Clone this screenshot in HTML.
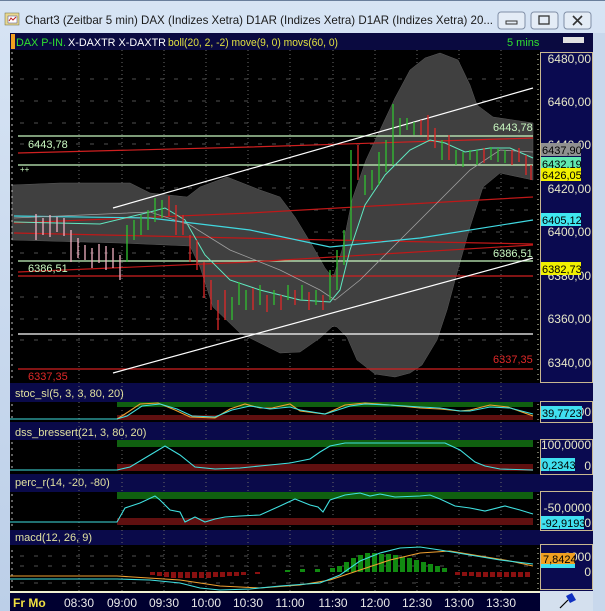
<!DOCTYPE html>
<html><head><meta charset="utf-8"><style>
html,body{margin:0;padding:0;width:605px;height:611px;overflow:hidden;background:#bfd2ea}
svg{display:block}
text{font-family:"Liberation Sans",sans-serif;}
</style></head><body>
<svg width="605" height="611" viewBox="0 0 605 611" xmlns="http://www.w3.org/2000/svg">
<defs>
<linearGradient id="tb" x1="0" y1="0" x2="0" y2="1"><stop offset="0" stop-color="#d7e4f4"/><stop offset="1" stop-color="#bccfe8"/></linearGradient>
</defs>
<rect x="0" y="0" width="605" height="611" fill="url(#tb)"/>
<rect x="0" y="0" width="605" height="1" fill="#6a7f9c"/>
<rect x="5" y="13" width="14" height="12" fill="#e8d890" stroke="#6a6a40" stroke-width="0.5"/>
<rect x="8" y="16" width="9" height="7" fill="#fff" stroke="#404080" stroke-width="0.5"/>
<polyline points="9,21 11,18 13,20 16,17" fill="none" stroke="#c02020" stroke-width="1"/>
<text x="25" y="24" font-size="12" fill="#1a1a1a" textLength="468" lengthAdjust="spacingAndGlyphs">Chart3 (Zeitbar 5 min)  DAX (Indizes Xetra) D1AR (Indizes Xetra) D1AR (Indizes Xetra) 20...</text>
<g stroke="#7f8ea6" fill="#e4ecf6"><rect x="498" y="12" width="27" height="17" rx="3"/><rect x="531" y="12" width="27" height="17" rx="3"/><rect x="564" y="12" width="27" height="17" rx="3"/></g>
<rect x="506" y="21" width="11" height="3" fill="none" stroke="#333" stroke-width="1"/>
<rect x="539" y="16" width="10" height="8" fill="none" stroke="#333" stroke-width="1.3"/>
<path d="M573 16 L582 25 M582 16 L573 25" stroke="#333" stroke-width="1.6"/>
<rect x="10" y="33" width="583" height="578" fill="#0a0a4a"/>
<rect x="10" y="33" width="583" height="17" fill="#0a0a40"/>
<rect x="11" y="34" width="4" height="15" fill="#f0a020"/>
<text x="16" y="46" font-size="11" fill="#30e030" textLength="50" lengthAdjust="spacingAndGlyphs">DAX P-IN.</text>
<text x="68" y="46" font-size="11" fill="#ffffff" textLength="98" lengthAdjust="spacingAndGlyphs">X-DAXTR X-DAXTR</text>
<text x="168" y="46" font-size="11" fill="#e0e040" textLength="170" lengthAdjust="spacingAndGlyphs">boll(20, 2, -2) move(9, 0) movs(60, 0)</text>
<text x="507" y="46" font-size="11" fill="#30e030">5 mins</text>
<rect x="563" y="37" width="21" height="6" fill="#e0e0e0"/>
<rect x="10" y="50" width="530" height="333" fill="#000"/>
<rect x="10" y="402" width="530" height="20" fill="#000"/>
<rect x="10" y="440" width="530" height="34" fill="#000"/>
<rect x="10" y="492" width="530" height="38" fill="#000"/>
<rect x="10" y="545" width="530" height="46" fill="#000"/>
<g stroke="#6a6a6a" stroke-width="1" stroke-dasharray="1,3">
<path d="M79 50V591M122 50V591M164 50V591M206 50V591M248 50V591M290 50V591M333 50V591M375 50V591M417 50V591M459 50V591M501 50V591"/>
</g>
<g stroke="#505050" stroke-width="1" stroke-dasharray="4,10">
<path d="M20 79H533M20 101H533M20 123H533M20 144H533M20 188H533M20 210H533M20 232H533M20 253H533M20 297H533M20 319H533M20 340H533"/>
<path d="M20 556H533M20 566H533M20 583H533"/>
</g>
<polygon fill="#404040" stroke="#5a5a5a" stroke-width="0.5" points="12,185 60,183 130,183 150,193 187,197 200,187 227,177 260,190 280,197 295,217 312,245 325,268 333,278 342,250 352,200 366,160 380,130 395,98 410,70 425,58 440,53 458,60 470,85 477,105 493,117 533,123 533,180 500,173 483,187 470,227 457,273 447,310 437,340 422,365 410,373 395,377 375,374 357,360 347,337 337,327 333,326 320,338 300,352 280,353 240,333 213,307 200,267 190,246 120,243 12,240"/>
<g stroke-width="1.2" fill="none">
<path d="M18 136H533" stroke="#c8f8c0"/>
<path d="M18 165H533" stroke="#c8f8c0"/>
<path d="M18 261H533" stroke="#c8f8c0"/>
<path d="M18 334H533" stroke="#ffffff"/>
<path d="M18 153 L250 147 L533 138" stroke="#d02020"/>
<path d="M18 369H533" stroke="#d02020"/>
<path d="M18 276H533" stroke="#d02020"/>
<path d="M14 223 L250 213 L533 197" stroke="#c01818"/>
<path d="M14 233 L330 240 L533 244" stroke="#c01818"/>
<path d="M18 272 L250 262 L533 245" stroke="#c01818"/>
<path d="M14 216 L150 218 L250 230 L330 247 L420 238 L533 220" stroke="#40d8e0"/>
<path d="M113 208 L533 88" stroke="#ffffff"/>
<path d="M113 373 L533 258" stroke="#ffffff"/>
<path d="M14 222 L100 224 L150 212 L165 208 L185 220 L205 255 L230 280 L260 290 L300 300 L330 302 L340 290 L350 250 L365 205 L385 175 L410 150 L430 140 L445 143 L465 152 L490 148 L510 148 L533 158" stroke="#60e8c0" stroke-width="1"/>
<path d="M14 218 L150 212 L190 225 L230 250 L280 270 L320 290 L335 300 L360 280 L400 240 L440 200 L470 170 L500 150 L533 152" stroke="#a0a0a0" stroke-width="0.8"/>
</g>
<g stroke-width="1.3">
<g stroke="#f0b0c0"><path d="M36 214V240M43 218V235M50 215V237M57 217V232M64 218V236M71 230V262M78 238V258M85 245V260M92 248V268M99 244V263M106 246V270M113 248V268M120 255V280"/></g>
<g stroke="#30c030"><path d="M127 225V262M134 220V240M141 215V235M148 210V230M155 198V222M162 200V218M232 297V320M239 282V305M246 290V310M260 285V305M274 290V305M288 285V300M302 285V300M316 290V305M330 270V300M337 250V290M344 230V265M351 150V240M365 175V195M372 170V190M379 152V185M386 140V172M393 104V165M400 118V135M407 118V130M414 122V135M442 140V160M456 150V165M463 152V167M470 150V160M477 150V165M491 147V160M498 148V162M505 150V163"/></g>
<g stroke="#e02828"><path d="M169 196V216M176 205V235M183 215V235M190 235V262M197 240V270M204 262V298M211 280V310M218 300V330M225 290V320M253 288V310M267 295V312M281 295V310M295 290V305M309 292V310M323 295V310M358 145V180M421 120V135M428 115V140M435 128V148M449 135V160M484 148V163M512 150V165M519 148V162M526 155V175M531 165V180"/></g>
</g>
<g font-size="11">
<text x="28" y="148" fill="#c8f8c0">6443,78</text>
<text x="28" y="272" fill="#c8f8c0">6386,51</text>
<text x="28" y="380" fill="#e02828">6337,35</text>
<text x="493" y="131" fill="#c8f8c0">6443,78</text>
<text x="493" y="257" fill="#c8f8c0">6386,51</text>
<text x="493" y="363" fill="#e02828">6337,35</text>
<text x="20" y="172" fill="#c8f8c0" font-size="8">++</text>
</g>
<g stroke="#c0c0c0" stroke-dasharray="2,4"><path d="M12 52V380M12 404V420M12 442V472M12 494V528M12 550V590"/></g>
<g font-size="11" fill="#e0e0a0">
<text x="15" y="397">stoc_sl(5, 3, 3, 80, 20)</text>
<text x="15" y="436">dss_bressert(21, 3, 80, 20)</text>
<text x="15" y="486">perc_r(14, -20, -80)</text>
<text x="15" y="541">macd(12, 26, 9)</text>
</g>
<g>
<rect x="117" y="402" width="416" height="5" fill="#106010"/><rect x="117" y="415" width="416" height="5" fill="#601010"/>
<rect x="117" y="440" width="416" height="7" fill="#106010"/><rect x="117" y="464" width="416" height="7" fill="#601010"/>
<rect x="117" y="492" width="416" height="7" fill="#106010"/><rect x="117" y="518" width="416" height="7" fill="#601010"/>
</g>
<g fill="none" stroke-width="1.1">
<polyline stroke="#f0a030" points="10,419 117,419 125,414 140,404 158,403 175,410 190,417 215,418 230,409 245,404 260,408 272,408 290,404 300,411 325,414 345,405 365,403 390,405 420,408 440,409 460,411 470,410 490,405 508,407 533,416"/>
<polyline stroke="#40e0e0" points="10,419 117,419 127,416 142,406 160,404 177,409 192,416 215,417 232,410 250,406 270,409 290,407 300,410 325,414 350,406 365,404 390,405 420,407 440,408 460,411 470,411 490,407 510,408 533,414"/>
<polyline stroke="#40e0e0" points="10,470 117,470 130,467 150,455 165,446 180,455 195,467 215,469 240,468 270,465 290,463 310,459 320,452 330,446 345,443 420,443 445,443 460,450 475,462 485,466 500,469 533,470"/>
<polyline stroke="#40e0e0" points="10,522 117,522 125,508 140,503 155,496 160,500 170,510 180,512 185,522 195,517 205,522 215,519 225,517 240,516 260,515 280,506 295,499 310,505 318,507 323,512 330,500 345,495 360,493 370,496 380,494 395,497 420,496 430,495 440,499 455,506 470,508 485,511 505,506 520,510 533,514"/>
</g>
<g fill="#118a11">
<rect x="285" y="570" width="5" height="2"/><rect x="300" y="569" width="5" height="3"/><rect x="315" y="569" width="5" height="3"/><rect x="330" y="568" width="5" height="4"/><rect x="337" y="566" width="5" height="6"/><rect x="344" y="562" width="5" height="10"/><rect x="351" y="558" width="5" height="14"/><rect x="358" y="555" width="5" height="17"/><rect x="365" y="553" width="5" height="19"/><rect x="372" y="553" width="5" height="19"/><rect x="379" y="554" width="5" height="18"/><rect x="386" y="554" width="5" height="18"/><rect x="393" y="555" width="5" height="17"/><rect x="400" y="557" width="5" height="15"/><rect x="407" y="558" width="5" height="14"/><rect x="414" y="560" width="5" height="12"/><rect x="421" y="562" width="5" height="10"/><rect x="428" y="564" width="5" height="8"/><rect x="435" y="566" width="5" height="6"/><rect x="442" y="568" width="5" height="4"/>
</g>
<g fill="#8a1010">
<rect x="150" y="572" width="5" height="3"/><rect x="157" y="572" width="5" height="4"/><rect x="164" y="572" width="5" height="5"/><rect x="171" y="572" width="5" height="6"/><rect x="178" y="572" width="5" height="6"/><rect x="185" y="572" width="5" height="6"/><rect x="192" y="572" width="5" height="6"/><rect x="199" y="572" width="5" height="6"/><rect x="206" y="572" width="5" height="6"/><rect x="213" y="572" width="5" height="5"/><rect x="220" y="572" width="5" height="5"/><rect x="227" y="572" width="5" height="4"/><rect x="234" y="572" width="5" height="4"/><rect x="241" y="572" width="5" height="3"/><rect x="255" y="572" width="5" height="2"/>
<rect x="455" y="572" width="5" height="3"/><rect x="462" y="572" width="5" height="4"/><rect x="469" y="572" width="5" height="4"/><rect x="476" y="572" width="5" height="5"/><rect x="483" y="572" width="5" height="5"/><rect x="490" y="572" width="5" height="5"/><rect x="497" y="572" width="5" height="5"/><rect x="504" y="572" width="5" height="5"/><rect x="511" y="572" width="5" height="5"/><rect x="518" y="572" width="5" height="5"/><rect x="525" y="572" width="5" height="5"/>
</g>
<g fill="none" stroke-width="1.1">
<polyline stroke="#f0a030" points="10,576 117,576 180,580 220,586 260,588 300,585 330,580 360,570 390,560 420,553 450,551 480,556 510,561 533,566"/>
<polyline stroke="#40e0e0" points="10,579 117,579 150,580 180,583 200,588 220,590 250,589 280,586 320,583 340,575 360,561 380,553 400,548 420,547 440,550 470,555 500,560 533,564"/>
</g>
<rect x="540" y="50" width="52" height="541" fill="#0a0a50"/>
<g fill="none" stroke="#c8b890" stroke-width="1">
<rect x="540.5" y="52.5" width="52" height="330"/>
<rect x="540.5" y="401.5" width="52" height="21"/>
<rect x="540.5" y="439.5" width="52" height="35"/>
<rect x="540.5" y="491.5" width="52" height="39"/>
<rect x="540.5" y="544.5" width="52" height="45"/>
</g>
<g stroke="#e0e0c0" stroke-dasharray="1,4"><path d="M538 54V382M538 404V420M538 442V472M538 494V528M538 548V590"/></g>
<g font-size="12" fill="#e8e8c8" text-anchor="end">
<text x="591" y="63">6480,00</text><text x="591" y="106">6460,00</text><text x="591" y="149">6440,00</text><text x="591" y="193">6420,00</text><text x="591" y="236">6400,00</text><text x="591" y="280">6380,00</text><text x="591" y="323">6360,00</text><text x="591" y="367">6340,00</text>
<text x="591" y="416">00</text>
<text x="591" y="449">100,0000</text><text x="591" y="470">0</text>
<text x="591" y="512">-50,0000</text><text x="591" y="527">0</text>
<text x="591" y="561">0000</text><text x="591" y="576">0</text>
</g>
<g font-size="11" fill="#000">
<rect x="541" y="143" width="40" height="13" fill="#909090"/><text x="542" y="154">6437,90</text>
<rect x="541" y="157" width="40" height="13" fill="#60e8b0"/><text x="542" y="168">6432,19</text>
<rect x="541" y="168" width="40" height="13" fill="#f0f000"/><text x="542" y="179">6426,05</text>
<rect x="541" y="213" width="40" height="13" fill="#40e8f0"/><text x="542" y="224">6405,12</text>
<rect x="541" y="262" width="40" height="13" fill="#f0f000"/><text x="542" y="273">6382,73</text>
<rect x="541" y="406" width="41" height="13" fill="#40e0f0"/><text x="542" y="417">39,7723</text>
<rect x="541" y="458" width="34" height="13" fill="#40e0f0"/><text x="542" y="469">0,2343</text>
<rect x="541" y="516" width="43" height="13" fill="#40e0f0"/><text x="542" y="527">-92,9193</text>
<rect x="541" y="562" width="34" height="6" fill="#40e0f0"/>
<rect x="541" y="553" width="34" height="11" fill="#f0a020"/><text x="543" y="563">7,8424</text>
</g>
<rect x="10" y="591" width="583" height="20" fill="#000030"/>
<rect x="10" y="591" width="530" height="2" fill="#f0f0d0"/>
<rect x="540" y="591" width="53" height="20" fill="#d4e0ee"/>
<text x="13" y="607" font-size="12" font-weight="bold" fill="#f0e040">Fr Mo</text>
<g font-size="12" fill="#e8e8e8" text-anchor="middle">
<text x="79" y="607">08:30</text><text x="122" y="607">09:00</text><text x="164" y="607">09:30</text><text x="206" y="607">10:00</text><text x="248" y="607">10:30</text><text x="290" y="607">11:00</text><text x="333" y="607">11:30</text><text x="375" y="607">12:00</text><text x="417" y="607">12:30</text><text x="459" y="607">13:00</text><text x="501" y="607">13:30</text>
</g>
<path d="M560 608 L568 600" stroke="#000" stroke-width="1.2"/>
<path d="M566 596 L572 593 L576 600 L570 603 Z" fill="#1030c0"/>
<rect x="593" y="33" width="12" height="578" fill="#c8d8ec"/>
</svg>
</body></html>
